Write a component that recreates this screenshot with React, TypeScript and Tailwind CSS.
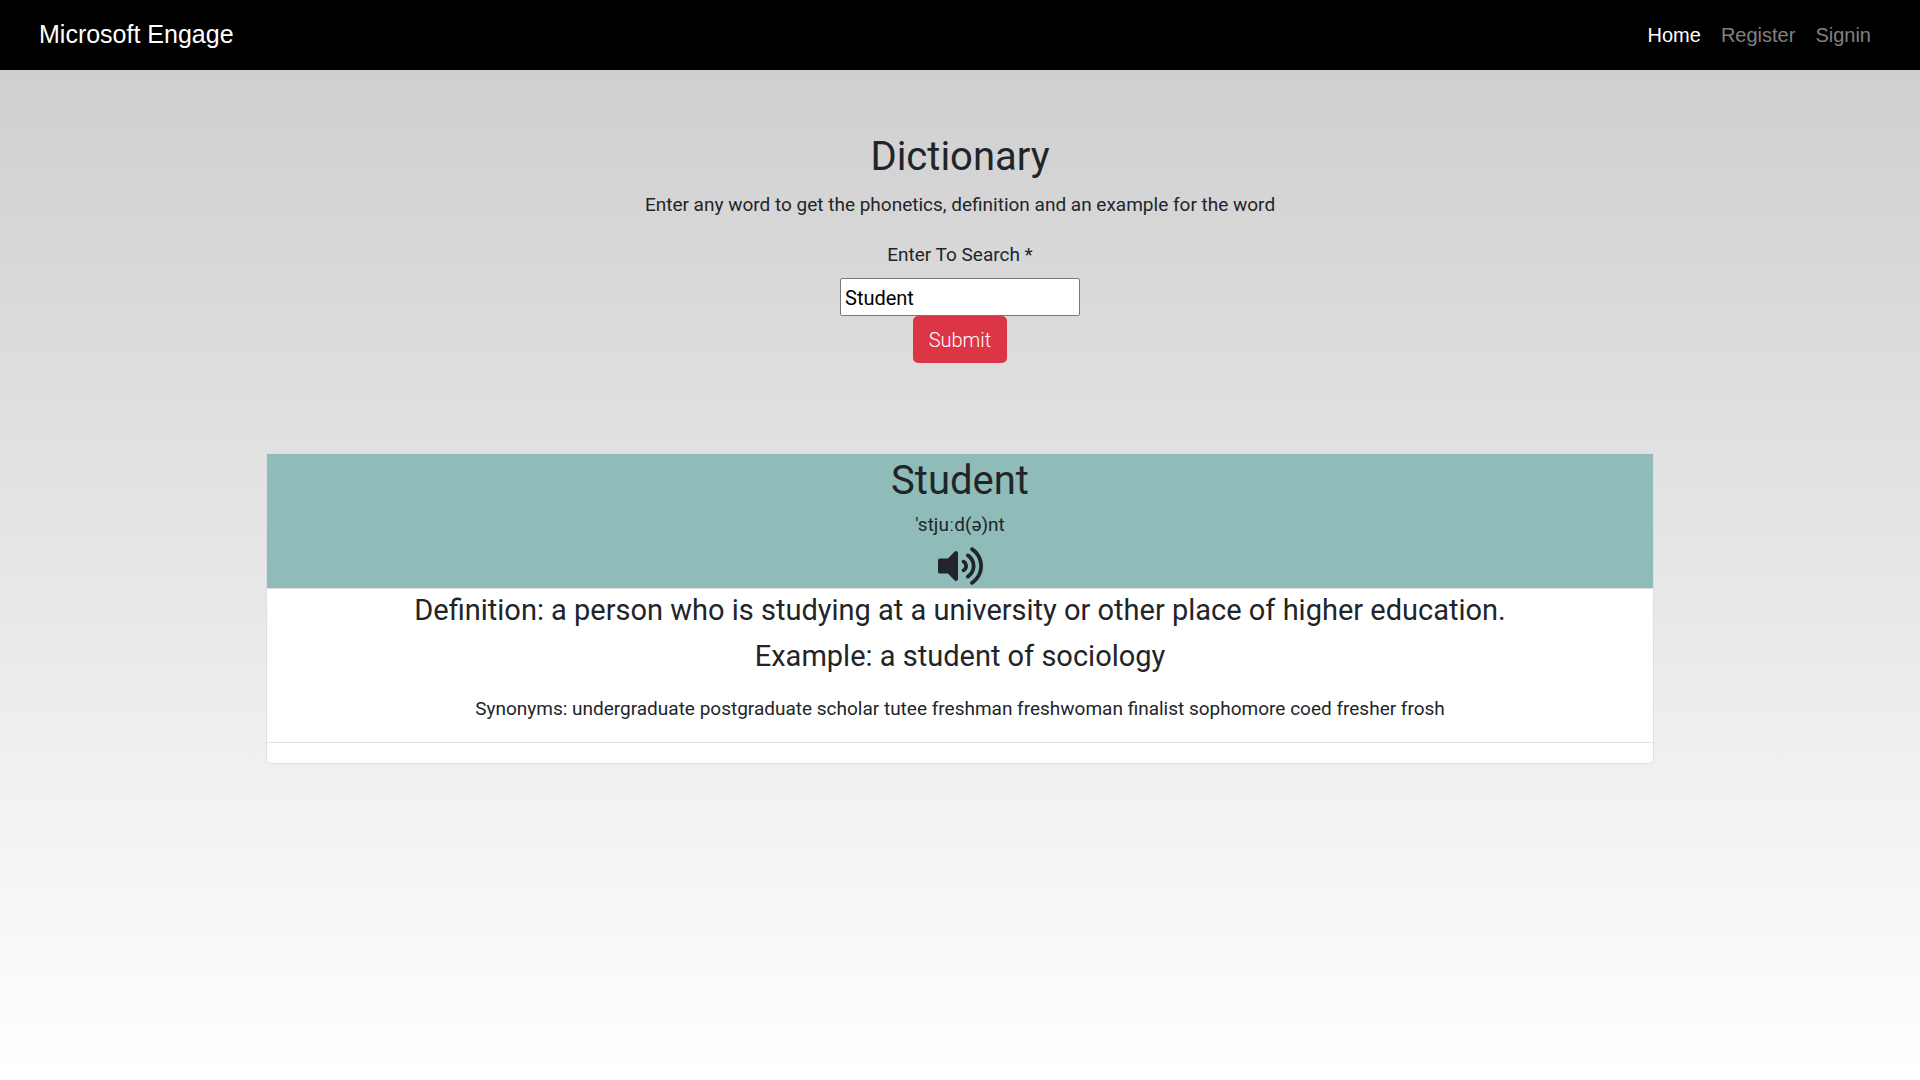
import { useState } from "react";
import { FaVolumeUp } from "react-icons/fa";

const links = [
  { label: "Home", active: true },
  { label: "Register", active: false },
  { label: "Signin", active: false },
];

export default function App() {
  const [word, setWord] = useState("Student");

  return (
    <div className="min-h-screen bg-linear-to-b from-[#cccccc] to-white font-['Roboto',sans-serif] text-[19px] leading-[30px] text-[#212529]">
      <nav className="flex items-center justify-between bg-black px-[39px] py-2.5 font-['Liberation_Sans',Arial,sans-serif]">
        <a href="#" className="pt-1 pb-1.5 text-[25px] leading-10 text-white">
          Microsoft Engage
        </a>
        <ul className="flex text-xl leading-[30px]">
          {links.map((link) => (
            <li key={link.label}>
              <a href="#" className={link.active ? "block px-2.5 text-white" : "block px-2.5 text-[#808080]"}>
                {link.label}
              </a>
            </li>
          ))}
        </ul>
      </nav>

      <main className="flex flex-col items-center px-5 pt-[62px] text-center">
        <h1 className="mb-2 text-[40px] leading-[50px]">Dictionary</h1>
        <p className="mb-5">Enter any word to get the phonetics, definition and an example for the word</p>
        <form className="flex flex-col items-center" onSubmit={(e) => e.preventDefault()}>
          <label htmlFor="word" className="mb-2">
            Enter To Search *
          </label>
          <input
            id="word"
            type="text"
            value={word}
            onChange={(e) => setWord(e.target.value)}
            className="h-[38px] w-60 rounded-xs border border-[#767676] bg-white px-1 pt-0.5 text-xl text-black"
          />
          <button type="submit" className="rounded-[5px] bg-[#dc3545] px-4 pt-[9px] pb-2 text-xl leading-[30px] font-light text-white">
            Submit
          </button>
        </form>

        <section className="mt-[90px] w-full max-w-[1388px] rounded-b-[5px] border border-[#dedede] bg-white">
          <header className="flex flex-col items-center border-b border-[#dedede] bg-[#8fbcb9] pt-0.5 pb-0.5">
            <h2 className="mb-1 text-[40px] leading-[50px]">Student</h2>
            <p>'stju&#720;d(ə)nt</p>
            <button type="button" aria-label="Play pronunciation" className="mt-1.5">
              <FaVolumeUp className="h-10 w-[45px]" />
            </button>
          </header>
          <h3 className="mt-[3px] mb-2.5 text-[29px] leading-9">
            Definition: a person who is studying at a university or other place of higher education.
          </h3>
          <h3 className="mb-5 text-[29px] leading-9">Example: a student of sociology</h3>
          <p className="mb-[18px]">
            Synonyms: undergraduate postgraduate scholar tutee freshman freshwoman finalist sophomore coed fresher frosh
          </p>
          <hr className="mb-5 border-[#e2e2e2]" />
        </section>
      </main>
    </div>
  );
}
